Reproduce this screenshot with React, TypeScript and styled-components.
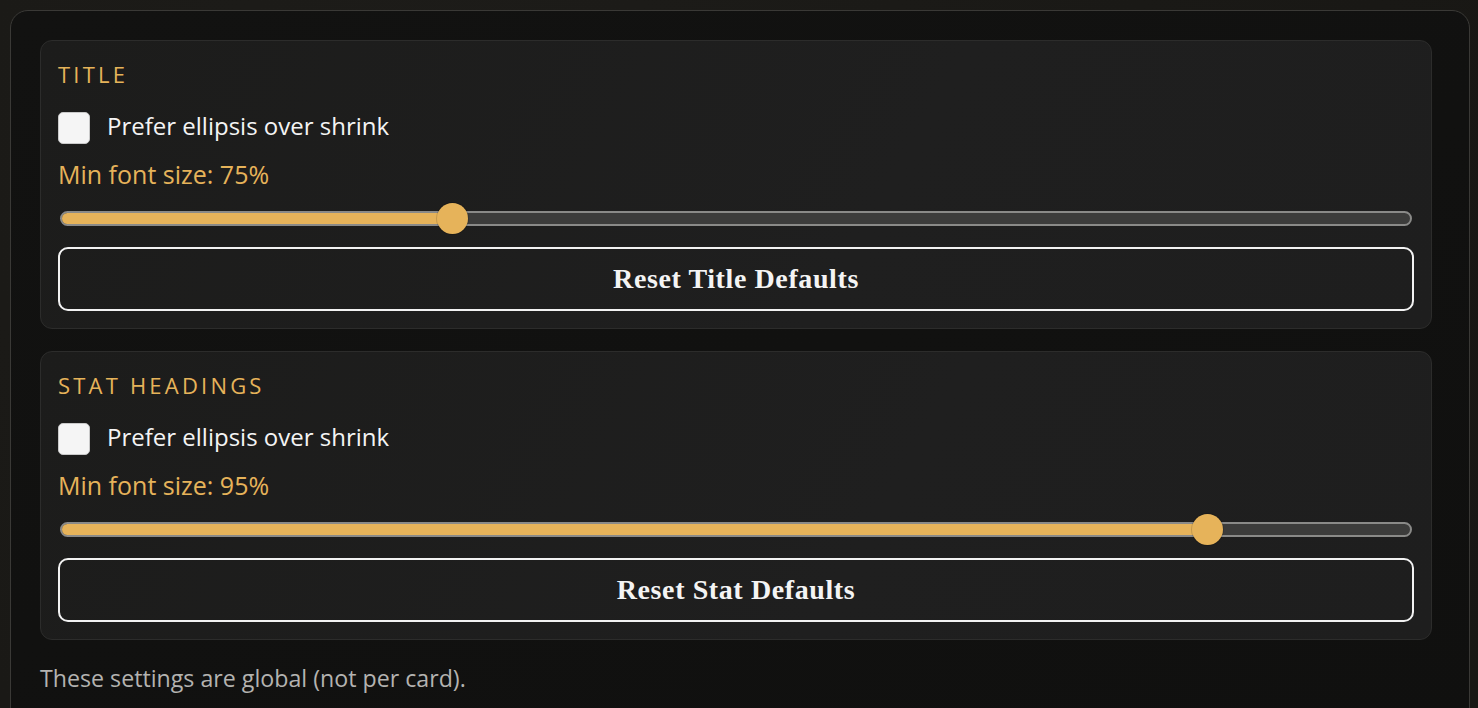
import React from 'react';
import styled, { createGlobalStyle } from 'styled-components';

const GlobalStyle = createGlobalStyle`
  html, body {
    margin: 0;
    padding: 0;
    background: #1b1a17;
    overflow: hidden;
  }
  * {
    box-sizing: border-box;
  }
`;

const SPage = styled.div`
  padding: 10px 8px 0 10px;
  height: 708px;
  overflow: hidden;
  background: radial-gradient(circle at 30% 20%, #1d1c19 0%, #181714 100%);
`;

const SPanel = styled.div`
  height: 740px;
  padding: 29px 37px 0 29px;
  border: 1px solid #3a3936;
  border-radius: 18px;
  background: linear-gradient(160deg, #121211 0%, #10100f 100%);
  display: flex;
  flex-direction: column;
  gap: 22px;
`;

const SCard = styled.section`
  padding: 17px;
  border: 1px solid #2c2c2b;
  border-radius: 12px;
  background: linear-gradient(120deg, #1c1c1b 0%, #1f1f1f 60%, #1e1e1e 100%);
  display: flex;
  flex-direction: column;
`;

const STitle = styled.h3`
  margin: 0;
  font-family: 'Open Sans', 'Noto Sans', sans-serif;
  font-weight: 400;
  font-size: 22px;
  line-height: 32px;
  letter-spacing: 3.2px;
  text-transform: uppercase;
  color: #e6b35a;
`;

const SCheckRow = styled.label`
  margin-top: 22px;
  display: flex;
  align-items: center;
  gap: 17px;
  height: 32px;
  font-family: 'Open Sans', 'Noto Sans', sans-serif;
  font-size: 24px;
  color: #f4f4f4;
`;

const SCheckText = styled.span`
  margin-bottom: 6px;
`;

const SCheckBox = styled.span`
  width: 32px;
  height: 32px;
  border-radius: 5px;
  border: 1px solid #c9c9c9;
  background: #f5f5f5;
`;

const SLabel = styled.div`
  margin-top: 14px;
  font-family: 'Open Sans', 'Noto Sans', sans-serif;
  font-size: 25px;
  line-height: 32px;
  color: #e6b35a;
`;

const SSlider = styled.div`
  position: relative;
  margin: 12px 2px 0;
  height: 32px;
  display: flex;
  align-items: center;
`;

const STrack = styled.div`
  position: relative;
  width: 100%;
  height: 15px;
  border: 2px solid #8a8a88;
  border-radius: 8px;
  background: #3c3c3b;
  overflow: hidden;
`;

const SFill = styled.div`
  height: 100%;
  background: #e6b35a;
`;

const SThumb = styled.div`
  position: absolute;
  top: 1px;
  width: 31px;
  height: 31px;
  border-radius: 50%;
  background: #e6b35a;
  box-shadow: 0 0 0 1px rgba(0, 0, 0, 0.15);
`;

const SButton = styled.button`
  margin-top: 13px;
  height: 64px;
  border: 2px solid #f2f2f2;
  border-radius: 10px;
  background: transparent;
  color: #f4f4f4;
  font-family: 'Liberation Serif', 'DejaVu Serif', serif;
  font-weight: 700;
  font-size: 28px;
  letter-spacing: 0.6px;
  cursor: pointer;
`;

const SNote = styled.p`
  margin: 0;
  font-family: 'Open Sans', 'Noto Sans', sans-serif;
  font-size: 23.2px;
  line-height: 32px;
  color: #b4b3b0;
`;

const MIN = 65;
const MAX = 100;

type SectionProps = {
  title: string;
  value: number;
  reset: string;
};

const Section = ({ title, value, reset }: SectionProps) => {
  const pct = (value - MIN) / (MAX - MIN);
  return (
    <SCard>
      <STitle>{title}</STitle>
      <SCheckRow>
        <SCheckBox />
        <SCheckText>Prefer ellipsis over shrink</SCheckText>
      </SCheckRow>
      <SLabel>Min font size: {value}%</SLabel>
      <SSlider>
        <STrack>
          <SFill style={{ width: `calc(${pct} * (100% - 30px) + 15px)` }} />
        </STrack>
        <SThumb style={{ left: `calc(${pct} * (100% - 31px))` }} />
      </SSlider>
      <SButton>{reset}</SButton>
    </SCard>
  );
};

const App = () => {
  return (
    <>
      <GlobalStyle />
      <SPage>
        <SPanel>
          <Section title='Title' value={75} reset='Reset Title Defaults' />
          <Section title='Stat Headings' value={95} reset='Reset Stat Defaults' />
          <SNote>These settings are global (not per card).</SNote>
        </SPanel>
      </SPage>
    </>
  );
};

export default App;
